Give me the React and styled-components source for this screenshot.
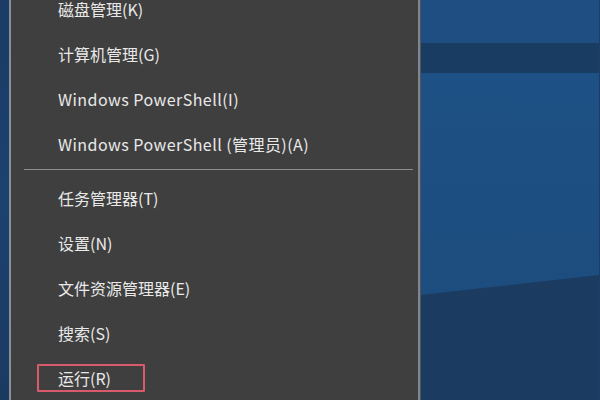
import React from 'react'
import styled, {createGlobalStyle} from 'styled-components'

const Global = createGlobalStyle`
	html, body {
		margin: 0;
		padding: 0;
		background: #1d4a78;
	}
	body {
		font-family: "Noto Sans CJK SC", "Noto Sans", sans-serif;
	}
`

const Screen = styled.div`
	width: 600px;
	height: 400px;
	display: flex;
	flex-direction: row;
	overflow: hidden;
	background: #1c3e66;
`

const Strip = styled.div`
	width: 9px;
	flex: none;
	background: linear-gradient(180deg, #1a3c64 0%, #1c4270 50%, #1a3a60 100%);
`

const Menu = styled.div`
	width: 407px;
	flex: none;
	background: #3f3f3f;
	border-left: 2px solid #8a9099;
	border-right: 2px solid #80858d;
	box-shadow: 1px 0 0 #50555c;
	overflow: hidden;
`

const List = styled.div`
	display: flex;
	flex-direction: column;
	margin-top: -14px;
`

const Item = styled.div`
	height: 45px;
	display: flex;
	align-items: center;
	padding-left: 47px;
	font-size: 16px;
	color: #e9e9e9;
	letter-spacing: ${p => p.$latin ? '0.45px' : '0'};
	white-space: nowrap;
`

const Label = styled.span`
	display: inline-flex;
	align-items: center;
	box-sizing: border-box;
	height: ${p => p.$marked ? '28px' : 'auto'};
	width: ${p => p.$marked ? '108px' : 'auto'};
	margin-left: ${p => p.$marked ? '-21px' : '0'};
	padding-left: ${p => p.$marked ? '19px' : '0'};
	border: ${p => p.$marked ? '2px solid #d85a6c' : 'none'};
	border-radius: 1px;
`

const Separator = styled.div`
	height: 1px;
	margin: 3px 5px 5px 13px;
	background: #8c8c8c;
`

const Desktop = styled.div`
	flex: 1;
	display: flex;
	margin-left: 1px;
`

const Wallpaper = () => (
	<svg width="178" height="400" viewBox="0 0 178 400" style={{display: 'block'}}>
		<defs>
			<linearGradient id="mid" x1="0" y1="0" x2="0" y2="1">
				<stop offset="0" stopColor="#1e5287" />
				<stop offset="1" stopColor="#1d4b7c" />
			</linearGradient>
		</defs>
		<rect x="0" y="0" width="178" height="400" fill="url(#mid)" />
		<rect x="0" y="0" width="178" height="43" fill="#1f4f82" />
		<rect x="0" y="43" width="178" height="30" fill="#193c63" />
		<polygon points="0,295 178,275 178,400 0,400" fill="#1b3b60" />
	</svg>
)

const top = ['磁盘管理(K)', '计算机管理(G)', 'Windows PowerShell(I)', 'Windows PowerShell (管理员)(A)']
const bottom = ['任务管理器(T)', '设置(N)', '文件资源管理器(E)', '搜索(S)', '运行(R)']

export default function App() {
	return (
		<Screen>
			<Global />
			<Strip />
			<Menu>
				<List>
					{top.map(t => (
						<Item key={t} $latin={t.startsWith('Windows')}><Label>{t}</Label></Item>
					))}
					<Separator />
					{bottom.map(t => (
						<Item key={t}><Label $marked={t === '运行(R)'}>{t}</Label></Item>
					))}
				</List>
			</Menu>
			<Desktop>
				<Wallpaper />
			</Desktop>
		</Screen>
	)
}
